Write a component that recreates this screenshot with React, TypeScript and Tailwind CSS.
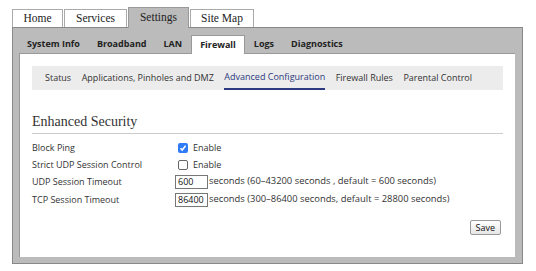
import React from "react";

const serif = { fontFamily: '"Liberation Serif", "DejaVu Serif", serif' };
const sans = { fontFamily: '"Open Sans", "DejaVu Sans", sans-serif' };

function TopTab({ label, active, w }: { label: string; active?: boolean; w: string }) {
  if (active) {
    return (
      <div
        className={`${w} h-[21px] text-center bg-[#bbbbbb] border border-b-0 border-[#999999] text-[11.5px] leading-[19px] text-[#222] relative top-[1px]`}
        style={serif}
      >
        {label}
      </div>
    );
  }
  return (
    <div
      className={`${w} h-[18px] text-center bg-white border border-b-0 border-[#aaaaaa] text-[11.5px] leading-[17px] text-[#222]`}
      style={serif}
    >
      {label}
    </div>
  );
}

function SubTab({ label, active }: { label: string; active?: boolean }) {
  if (active) {
    return (
      <div className="h-[19px] px-[8px] bg-white border border-b-0 border-[#999] text-[9px] font-bold leading-[17px] text-[#222] relative top-[1px]">
        {label}
      </div>
    );
  }
  return (
    <div className="h-[18px] px-[8px] text-[9px] font-bold leading-[18px] text-[#222]">{label}</div>
  );
}

export default function App() {
  return (
    <div className="w-[536px] h-[271px] bg-white overflow-hidden" style={sans}>
      <div className="flex items-end gap-[1px] pl-[12px] pt-[6px] h-[27px]">
        <TopTab label="Home" w="w-[51px]" />
        <TopTab label="Services" w="w-[63px]" />
        <TopTab label="Settings" w="w-[61px]" active />
        <TopTab label="Site Map" w="w-[64px]" />
      </div>
      <div className="ml-[12px] w-[511px] h-[237px] bg-[#bbbbbb] border border-[#888888] flex flex-col">
        <div className="flex items-end gap-[1px] pl-[6px] h-[25px]">
          <SubTab label="System Info" />
          <SubTab label="Broadband" />
          <SubTab label="LAN" />
          <SubTab label="Firewall" active />
          <SubTab label="Logs" />
          <SubTab label="Diagnostics" />
        </div>
        <div className="ml-[6px] mr-[7px] h-[204px] bg-white border-t border-l border-[#999999] px-[12px] pt-[12px] text-[#333]">
          <div className="h-[24px] bg-[#ececec] flex items-stretch pl-[13px] gap-[10.5px] text-[9px] text-[#333]">
            <span className="leading-[24px]">Status</span>
            <span className="leading-[24px]">Applications, Pinholes and DMZ</span>
            <span className="leading-[22px] text-[#2d3a80] border-b-2 border-[#2d3a80]">Advanced Configuration</span>
            <span className="leading-[24px]">Firewall Rules</span>
            <span className="leading-[24px]">Parental Control</span>
          </div>
          <div className="mt-[24px] text-[14px] leading-[16px] text-[#333] pb-[3px] border-b border-[#cccccc]" style={serif}>
            Enhanced Security
          </div>
          <div className="mt-[5px] text-[9px] text-[#333]">
            <div className="flex items-center h-[17px]">
              <div className="w-[143px]">Block Ping</div>
              <span className="ml-[3px] w-[10px] h-[10px] rounded-[2px] bg-[#2f7cf6] flex items-center justify-center">
                <svg width="8" height="8" viewBox="0 0 8 8">
                  <path d="M1.5 4.2 L3.2 6 L6.6 1.8" stroke="white" strokeWidth="1.5" fill="none" />
                </svg>
              </span>
              <span className="ml-[5px]">Enable</span>
            </div>
            <div className="flex items-center h-[17px]">
              <div className="w-[143px]">Strict UDP Session Control</div>
              <span className="ml-[3px] w-[10px] h-[10px] rounded-[2px] border border-[#666] bg-white"></span>
              <span className="ml-[5px]">Enable</span>
            </div>
            <div className="flex items-center h-[17px]">
              <div className="w-[143px]">UDP Session Timeout</div>
              <div className="w-[33px] h-[14px] border border-[#777] px-[2px] leading-[12px] text-[#111]">600</div>
              <span className="ml-[1px] text-[9.4px]">seconds (60–43200 seconds , default = 600 seconds)</span>
            </div>
            <div className="flex items-center h-[19px]">
              <div className="w-[143px]">TCP Session Timeout</div>
              <div className="w-[33px] h-[14px] border border-[#777] px-[2px] leading-[12px] text-[#111]">86400</div>
              <span className="ml-[1px] text-[9.4px]">seconds (300–86400 seconds, default = 28800 seconds)</span>
            </div>
          </div>
          <div className="flex justify-end mt-[11px] pr-[2px]">
            <div className="h-[15px] px-[5px] border border-[#999] rounded-[2px] bg-gradient-to-b from-white to-[#e6e6e6] text-[9px] leading-[13px] text-[#111]">
              Save
            </div>
          </div>
        </div>
      </div>
    </div>
  );
}
